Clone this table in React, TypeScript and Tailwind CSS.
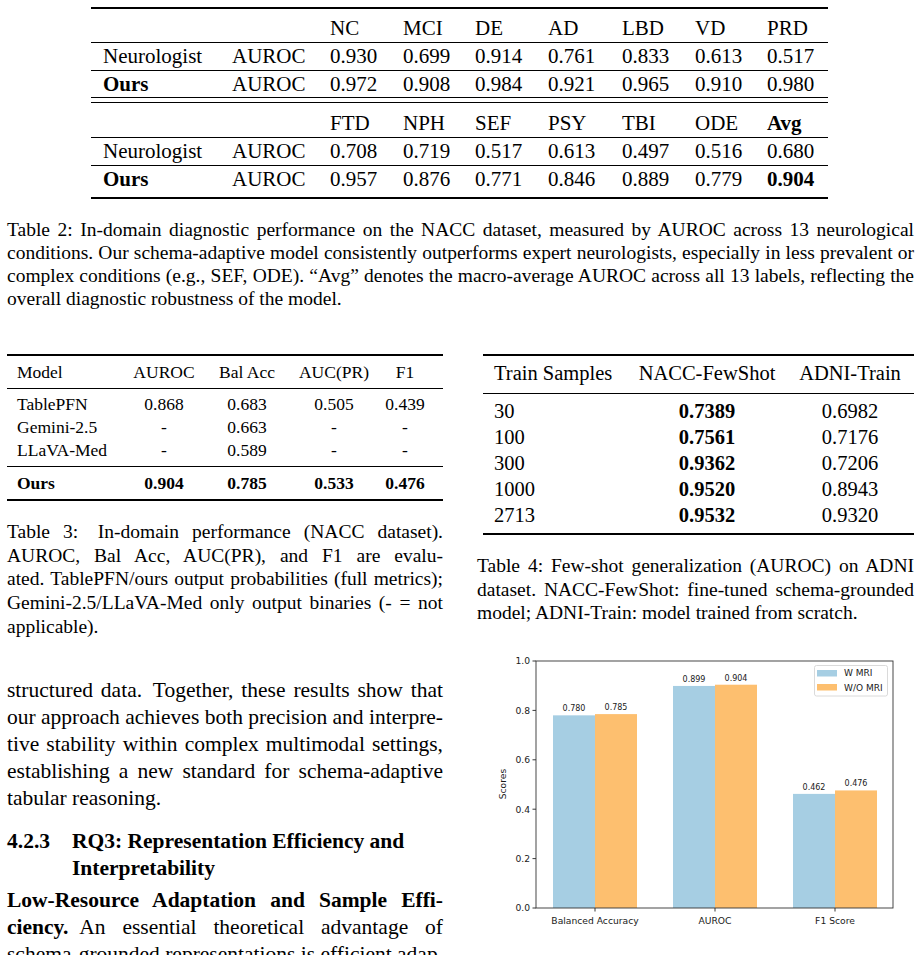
import React from "react";

const serif = "font-['Liberation_Serif','Times_New_Roman',serif]";
const just = "block whitespace-nowrap text-justify [text-align-last:justify]";

// table 2 (the wide one)
const t1cols = "grid grid-cols-[141px_98px_73px_72px_73px_74px_73px_72px_1fr]";

function Row1({ label, bold, cells, cls }: { label: string; bold?: boolean; cells: React.ReactNode[]; cls: string }) {
    return (
        <div className={`${t1cols} ${cls}`}>
            <div className={`pl-[12px] ${bold ? "font-bold" : ""}`}>{label}</div>
            <div>{label ? "AUROC" : ""}</div>
            {cells.map((c, i) => (
                <div key={i}>{c}</div>
            ))}
        </div>
    );
}

function WideTable() {
    return (
        <div className={`ml-[91px] mt-[7px] w-[737px] border-t-2 border-b-2 border-black text-[21px] ${serif}`}>
            <Row1 label="" cells={["NC", "MCI", "DE", "AD", "LBD", "VD", "PRD"]} cls="h-[33px] pt-[5px] leading-[28px]" />
            <Row1
                label="Neurologist"
                cells={["0.930", "0.699", "0.914", "0.761", "0.833", "0.613", "0.517"]}
                cls="h-[28px] border-t border-black leading-[27px]"
            />
            <Row1
                label="Ours"
                bold
                cells={["0.972", "0.908", "0.984", "0.921", "0.965", "0.910", "0.980"]}
                cls="h-[27px] border-t border-black leading-[26px]"
            />
            <div className="h-[6px] border-y border-black" />
            <Row1
                label=""
                cells={["FTD", "NPH", "SEF", "PSY", "TBI", "ODE", <b key="a">Avg</b>]}
                cls="h-[34px] pt-[6px] leading-[28px]"
            />
            <Row1
                label="Neurologist"
                cells={["0.708", "0.719", "0.517", "0.613", "0.497", "0.516", "0.680"]}
                cls="h-[28px] border-t border-black leading-[27px]"
            />
            <Row1
                label="Ours"
                bold
                cells={["0.957", "0.876", "0.771", "0.846", "0.889", "0.779", <b key="b">0.904</b>]}
                cls="h-[32px] border-t border-black leading-[27px]"
            />
        </div>
    );
}

const t3cols = "grid grid-cols-[113px_88px_78px_96px_46px_1fr]";

function Row3({ cells, cls }: { cells: string[]; cls?: string }) {
    return (
        <div className={`${t3cols} ${cls ?? ""}`}>
            {cells.map((c, i) => (
                <div key={i} className={i === 0 ? "pl-[10px]" : "text-center"}>
                    {c}
                </div>
            ))}
        </div>
    );
}

function ModelTable() {
    return (
        <div className={`border-t-2 border-b-2 border-black text-[17.5px] ${serif}`}>
            <Row3 cells={["Model", "AUROC", "Bal Acc", "AUC(PR)", "F1"]} cls="h-[32px] pt-[4px] leading-[24px]" />
            <div className="border-t border-black pt-[4px] pb-[4px] leading-[23px]">
                <Row3 cells={["TablePFN", "0.868", "0.683", "0.505", "0.439"]} />
                <Row3 cells={["Gemini-2.5", "-", "0.663", "-", "-"]} />
                <Row3 cells={["LLaVA-Med", "-", "0.589", "-", "-"]} />
            </div>
            <Row3
                cells={["Ours", "0.904", "0.785", "0.533", "0.476"]}
                cls="h-[33px] border-t border-black pt-[4px] leading-[24px] font-bold"
            />
        </div>
    );
}

const t4cols = "grid grid-cols-[142px_164px_122px_1fr]";

const fewShot = [
    ["30", "0.7389", "0.6982"],
    ["100", "0.7561", "0.7176"],
    ["300", "0.9362", "0.7206"],
    ["1000", "0.9520", "0.8943"],
    ["2713", "0.9532", "0.9320"],
];

function FewShotTable() {
    return (
        <div className={`ml-[6px] w-[431px] border-t-2 border-b-2 border-black text-[20.5px] ${serif}`}>
            <div className={`${t4cols} h-[37px] pt-[4px] leading-[26px]`}>
                <div className="pl-[11px]">Train Samples</div>
                <div className="text-center">NACC-FewShot</div>
                <div className="text-center">ADNI-Train</div>
            </div>
            <div className="border-t border-black pt-[4px] pb-[5px] leading-[26px]">
                {fewShot.map((r) => (
                    <div key={r[0]} className={t4cols}>
                        <div className="pl-[11px]">{r[0]}</div>
                        <div className="text-center font-bold">{r[1]}</div>
                        <div className="text-center">{r[2]}</div>
                    </div>
                ))}
            </div>
        </div>
    );
}

// bar chart, drawn like the matplotlib figure
const groups = [
    { name: "Balanced Accuracy", a: 0.78, b: 0.785 },
    { name: "AUROC", a: 0.899, b: 0.904 },
    { name: "F1 Score", a: 0.462, b: 0.476 },
];

function Chart() {
    const x0 = 56, x1 = 413, y0 = 10, y1 = 257;
    const sy = (v: number) => y1 - v * (y1 - y0);
    const centers = [115, 235, 355];
    const bw = 42;
    const txt = "#1a1a1a";
    return (
        <svg width="437" height="305" className="ml-[3px] block" fontFamily="DejaVu Sans, Liberation Sans, sans-serif">
            {groups.map((g, i) => {
                const c = centers[i];
                return (
                    <g key={g.name}>
                        <rect x={c - bw} y={sy(g.a)} width={bw} height={y1 - sy(g.a)} fill="#a6cee3" />
                        <rect x={c} y={sy(g.b)} width={bw} height={y1 - sy(g.b)} fill="#fdbf6f" />
                        <text x={c - bw / 2} y={sy(g.a) - 4} fontSize="8" textAnchor="middle" fill={txt}>
                            {g.a.toFixed(3)}
                        </text>
                        <text x={c + bw / 2} y={sy(g.b) - 4} fontSize="8" textAnchor="middle" fill={txt}>
                            {g.b.toFixed(3)}
                        </text>
                        <line x1={c} x2={c} y1={y1} y2={y1 + 3.5} stroke="#222" strokeWidth="0.9" />
                        <text x={c} y={273} fontSize="9.2" textAnchor="middle" fill={txt}>
                            {g.name}
                        </text>
                    </g>
                );
            })}
            {[0, 0.2, 0.4, 0.6, 0.8, 1.0].map((v) => (
                <g key={v}>
                    <line x1={x0 - 3.5} x2={x0} y1={sy(v)} y2={sy(v)} stroke="#222" strokeWidth="0.9" />
                    <text x={x0 - 6} y={sy(v) + 3.3} fontSize="9.2" textAnchor="end" fill={txt}>
                        {v.toFixed(1)}
                    </text>
                </g>
            ))}
            <rect x={x0} y={y0} width={x1 - x0} height={y1 - y0} fill="none" stroke="#333" strokeWidth="0.9" />
            <text x={0} y={0} fontSize="9.2" textAnchor="middle" fill={txt} transform="translate(26 133) rotate(-90)">
                Scores
            </text>
            {/* legend */}
            <rect x={334.5} y={14.5} width={73} height={30.5} rx="2" fill="white" fillOpacity="0.8" stroke="#d6d6d6" strokeWidth="0.9" />
            <rect x={337} y={19} width={20} height={6.5} fill="#a6cee3" />
            <rect x={337} y={33} width={20} height={6.5} fill="#fdbf6f" />
            <text x={364} y={25} fontSize="9" fill={txt}>
                W MRI
            </text>
            <text x={364} y={39.5} fontSize="9" fill={txt}>
                W/O MRI
            </text>
        </svg>
    );
}

function Lines({ lines, cls }: { lines: React.ReactNode[]; cls: string }) {
    return (
        <div className={cls}>
            {lines.map((l, i) => (
                <span key={i} className={i < lines.length - 1 ? just : "block whitespace-nowrap"}>
                    {l}
                </span>
            ))}
        </div>
    );
}

export default function App() {
    return (
        <div className={`relative h-[955px] w-[921px] overflow-hidden bg-white text-black ${serif}`}>
            <WideTable />

            <Lines
                cls="mt-[19px] px-[7px] text-[19.5px] leading-[23px]"
                lines={[
                    "Table 2: In-domain diagnostic performance on the NACC dataset, measured by AUROC across 13 neurological",
                    "conditions. Our schema-adaptive model consistently outperforms expert neurologists, especially in less prevalent or",
                    "complex conditions (e.g., SEF, ODE). \u201cAvg\u201d denotes the macro-average AUROC across all 13 labels, reflecting the",
                    "overall diagnostic robustness of the model.",
                ]}
            />

            <div className="mt-[44px] flex gap-[34px] pl-[7px]">
                {/* left column */}
                <div className="w-[436px] shrink-0">
                    <ModelTable />
                    <Lines
                        cls="mt-[19px] text-[19.5px] leading-[23.7px]"
                        lines={[
                            "Table 3:\u2003In-domain performance (NACC dataset).",
                            "AUROC, Bal Acc, AUC(PR), and F1 are evalu-",
                            "ated. TablePFN/ours output probabilities (full metrics);",
                            "Gemini-2.5/LLaVA-Med only output binaries (- = not",
                            "applicable).",
                        ]}
                    />
                    <Lines
                        cls="mt-[38px] text-[21.5px] leading-[27px]"
                        lines={[
                            "structured data.\u2002Together, these results show that",
                            "our approach achieves both precision and interpre-",
                            "tive stability within complex multimodal settings,",
                            "establishing a new standard for schema-adaptive",
                            "tabular reasoning.",
                        ]}
                    />
                    <div className="mt-[16px] flex text-[21.5px] leading-[27px] font-bold">
                        <div className="w-[65px] shrink-0">4.2.3</div>
                        <div>
                            <div>RQ3: Representation Efficiency and</div>
                            <div>Interpretability</div>
                        </div>
                    </div>
                    <Lines
                        cls="mt-[5px] text-[21.5px] leading-[27px]"
                        lines={[
                            <b key="l">Low-Resource Adaptation and Sample Effi-</b>,
                            <>
                                <b>ciency.</b>
                                {"\u2002An essential theoretical advantage of"}
                            </>,
                            "schema-grounded representations is efficient adap-",
                            "",
                        ]}
                    />
                </div>

                {/* right column */}
                <div className="w-[437px] shrink-0">
                    <FewShotTable />
                    <Lines
                        cls="mt-[19px] text-[19.5px] leading-[23.7px]"
                        lines={[
                            "Table 4: Few-shot generalization (AUROC) on ADNI",
                            "dataset. NACC-FewShot: fine-tuned schema-grounded",
                            "model; ADNI-Train: model trained from scratch.",
                        ]}
                    />
                    <div className="mt-[26px]">
                        <Chart />
                    </div>
                </div>
            </div>
        </div>
    );
}
